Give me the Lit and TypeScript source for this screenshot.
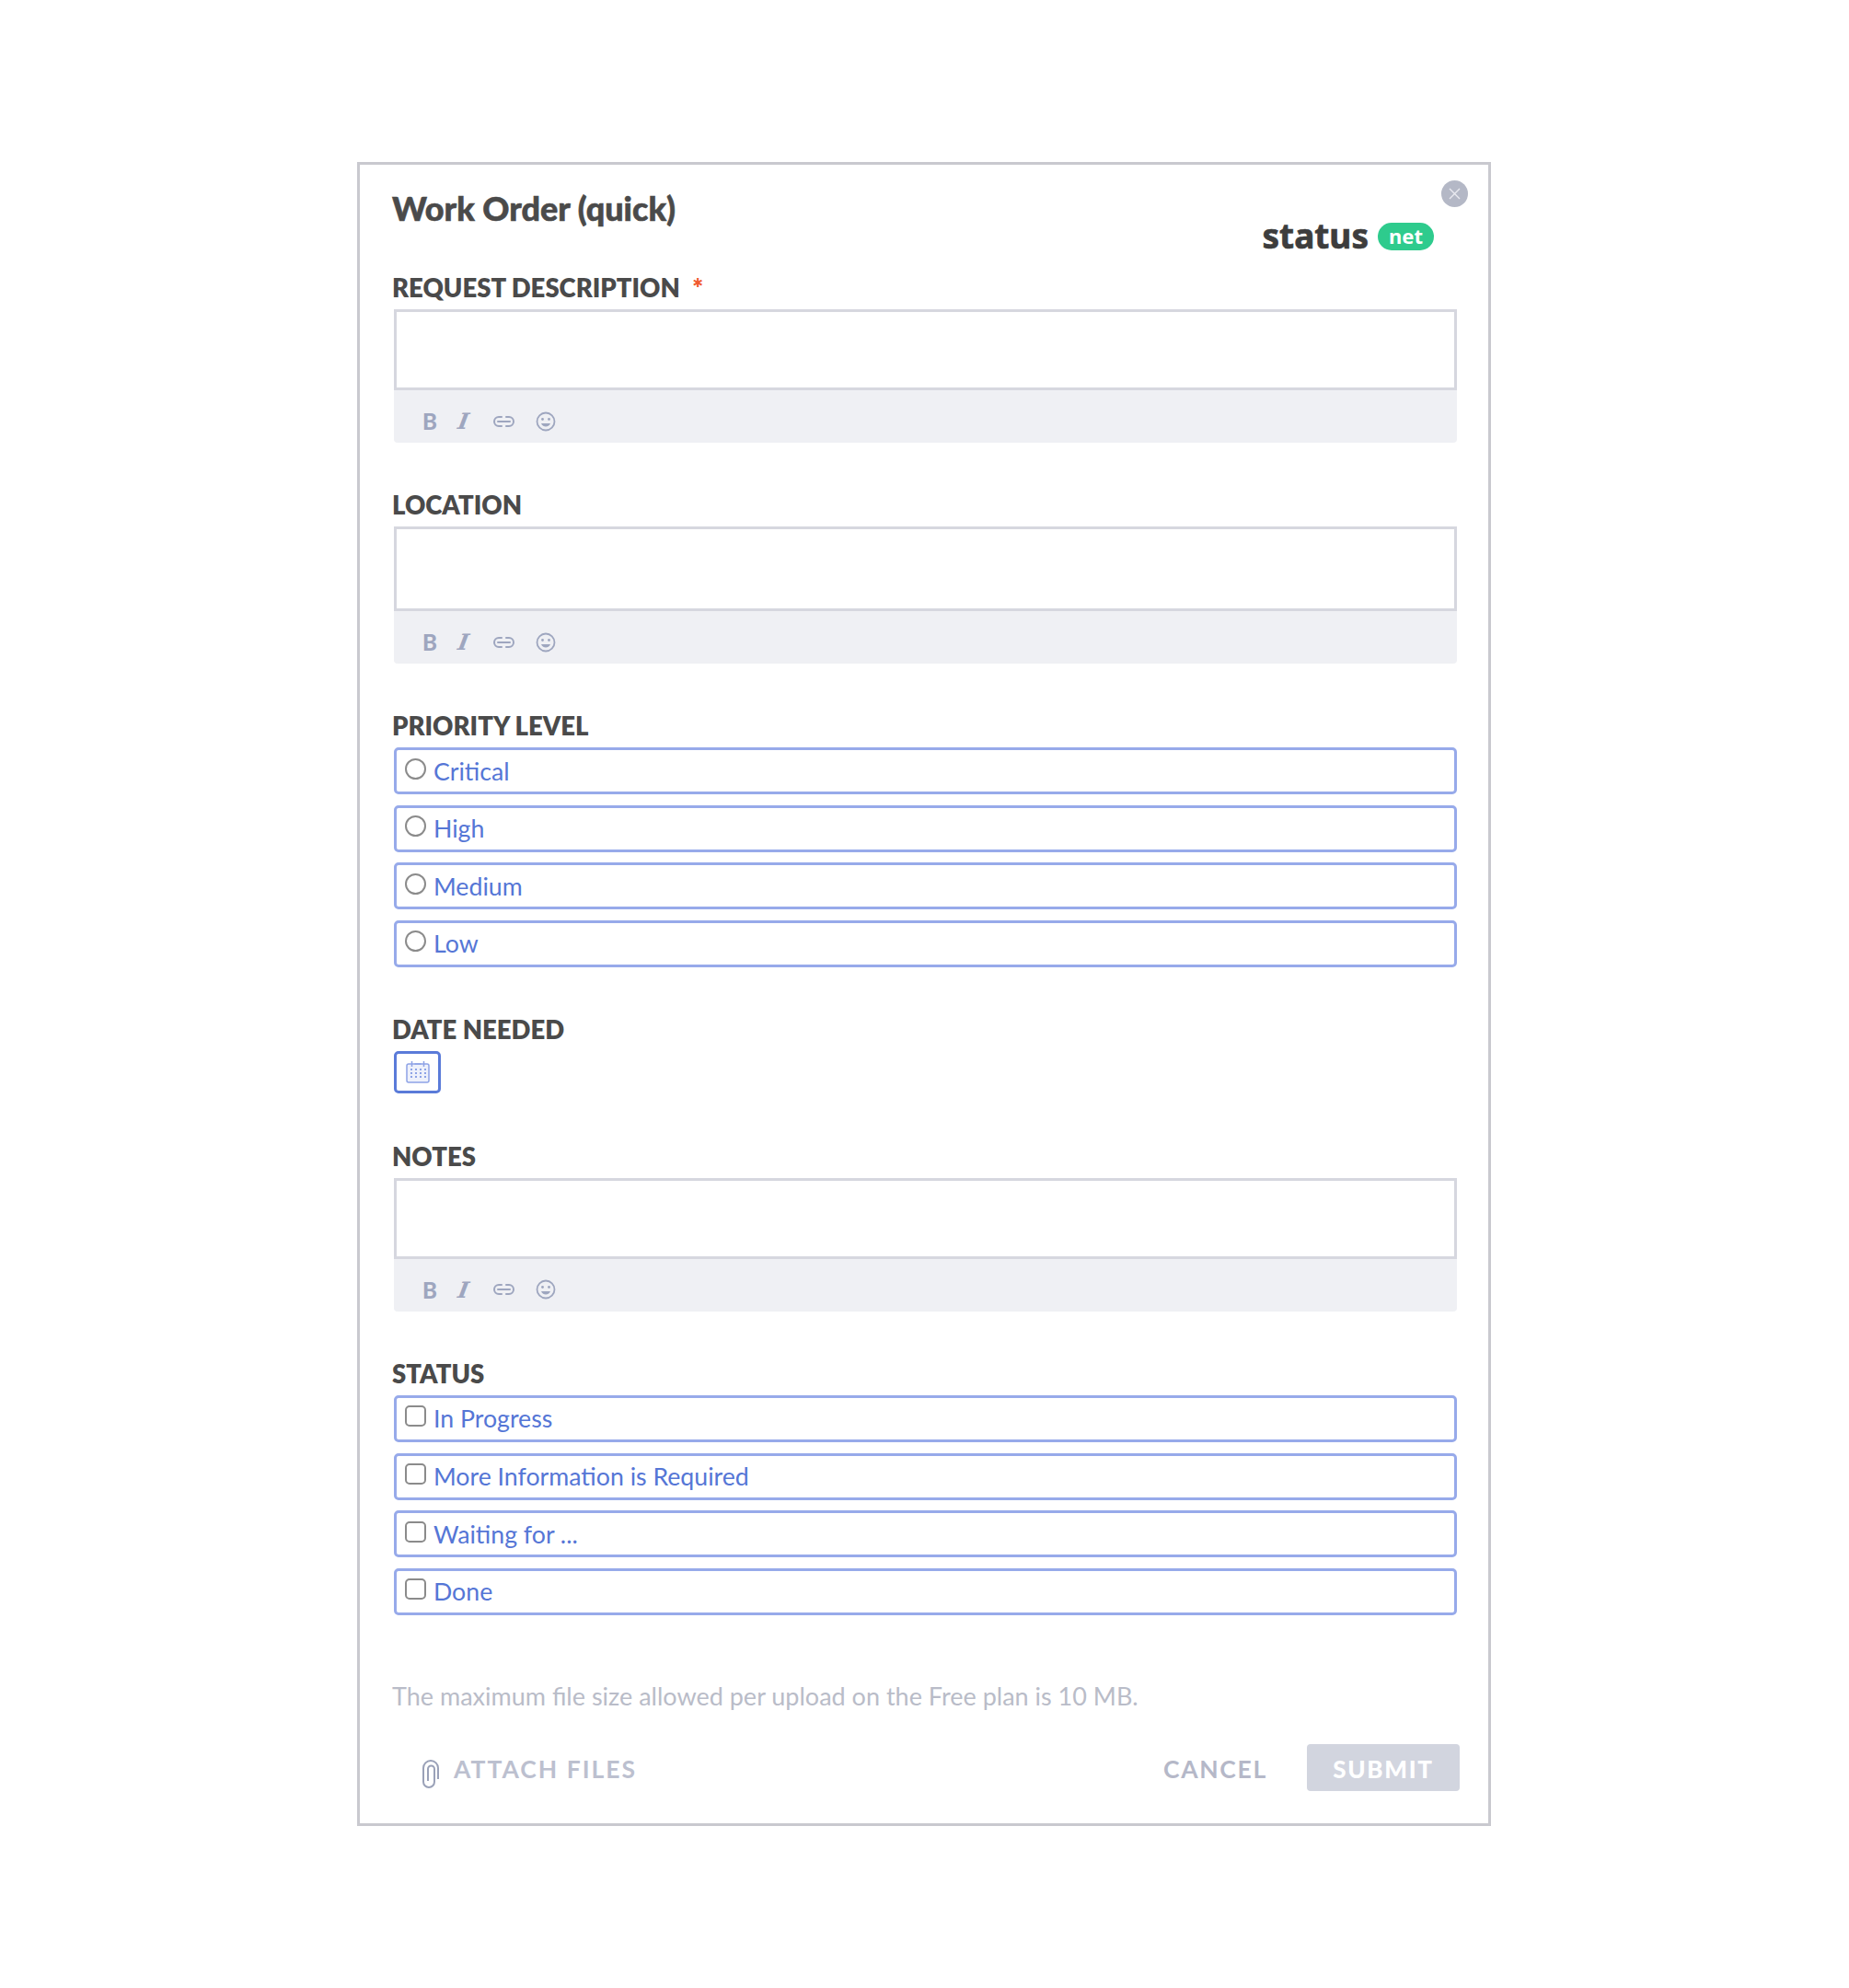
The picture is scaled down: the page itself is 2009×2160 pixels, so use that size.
import { LitElement, html, css, svg } from 'lit';
import { customElement } from 'lit/decorators.js';

const priorities = ['Critical', 'High', 'Medium', 'Low'];
const statuses = ['In Progress', 'More Information is Required', 'Waiting for ...', 'Done'];

const linkIcon = svg`<path d="M10 5H7a5 5 0 0 0 0 10h3M15 5h3a5 5 0 0 1 0 10h-3M6 10h13" fill="none" stroke="currentColor" stroke-width="2" stroke-linecap="round"/>`;
const smileIcon = svg`<circle cx="11" cy="11" r="9.5" fill="none" stroke="currentColor" stroke-width="1.8"/><circle cx="7.5" cy="8.5" r="1.4" fill="currentColor"/><circle cx="14.5" cy="8.5" r="1.4" fill="currentColor"/><path d="M6 13c1.200 2.600 3 3.500 5 3.500s3.800-.9 5-3.500z" fill="currentColor"/>`;

@customElement('app-root')
export class AppRoot extends LitElement {
  static styles = css`
    :host {
      display: block;
      font-family: 'Lato', 'Liberation Sans', sans-serif;
      background: #fff;
    }
    .page {
      height: 2160px;
      padding: 176px 0 0 388px;
      box-sizing: border-box;
    }
    .card {
      position: relative;
      width: 1232px;
      height: 1808px;
      box-sizing: border-box;
      border: 3px solid #c9c9cf;
      padding: 0 34px 0 35px;
    }
    .close {
      position: absolute;
      top: 17px;
      right: 22px;
      width: 29px;
      height: 29px;
      border-radius: 50%;
      background: #b4b8c6;
      display: flex;
      align-items: center;
      justify-content: center;
    }
    .header {
      display: flex;
      justify-content: space-between;
      height: 115px;
    }
    h1 {
      margin: 25px 0 0;
      font-size: 36px;
      line-height: 44px;
      font-weight: 900;
      color: #4a4a4a;
      -webkit-text-stroke: 0.6px #4a4a4a;
    }
    .logo {
      display: flex;
      align-items: center;
      gap: 10px;
      height: 34px;
      margin: 61px 25px 0 0;
    }
    .logo b {
      margin-top: -3px;
      font-family: 'Noto Sans', sans-serif;
      font-size: 37px;
      font-weight: 700;
      color: #3d3d3d;
      -webkit-text-stroke: 0.7px #3d3d3d;
    }
    .logo span {
      width: 61px;
      height: 30px;
      border-radius: 15px;
      background: #2ecb8d;
      color: #fff;
      font-family: 'Noto Sans', sans-serif;
      font-size: 22px;
      font-weight: 700;
      line-height: 29px;
      text-align: center;
    }
    .field {
      margin-bottom: 50px;
    }
    .field.date-field {
      margin-bottom: 51px;
    }
    label {
      display: block;
      height: 34px;
      line-height: 36px;
      margin-bottom: 7px;
      font-size: 27.5px;
      font-weight: 800;
      color: #4a4a4a;
    }
    label.first {
      margin-bottom: 8px;
    }
    .req {
      color: #f05a30;
      font-size: 28px;
      margin-left: 7px;
    }
    .input {
      box-sizing: border-box;
      border: 3px solid #d6d7df;
      background: #fff;
      margin-left: 2px;
    }
    .toolbar {
      display: flex;
      align-items: center;
      box-sizing: border-box;
      height: 57px;
      margin-left: 2px;
      padding: 10px 0 0 31px;
      background: #eff0f4;
      border-radius: 0 0 4px 4px;
      color: #9ea6bf;
    }
    .toolbar .b {
      width: 39px;
      font-size: 24px;
      font-weight: 900;
    }
    .toolbar .i {
      width: 38px;
      font-family: 'DejaVu Serif', serif;
      font-size: 24px;
      font-style: italic;
      font-weight: 700;
      transform: skewX(-10deg);
    }
    .toolbar svg {
      display: block;
    }
    .toolbar .link {
      margin: 0 22px 0 -1px;
    }
    .options {
      display: flex;
      flex-direction: column;
      gap: 11.67px;
      margin: 1px 0 0 2px;
    }
    .options.priority {
      margin-bottom: 50px;
    }
    .options.status {
      margin-top: 3px;
    }
    .option {
      display: flex;
      align-items: center;
      gap: 8px;
      box-sizing: border-box;
      height: 51px;
      padding: 0 0 0 9px;
      border: 3px solid #97aaea;
      border-radius: 5px;
      color: #5576d6;
      font-size: 26.7px;
    }
    .mark {
      width: 23px;
      height: 23px;
      box-sizing: border-box;
      border: 2.5px solid #8b8b8b;
      margin-top: -5px;
    }
    .mark.radio {
      border-radius: 50%;
    }
    .mark.check {
      border-radius: 5px;
    }
    .date {
      display: flex;
      align-items: center;
      justify-content: center;
      box-sizing: border-box;
      width: 51px;
      height: 46px;
      margin-left: 2px;
      border: 3px solid #5a7bd9;
      border-radius: 5px;
    }
    .note {
      margin: 0;
      padding-top: 21px;
      font-size: 27px;
      line-height: 34px;
      color: #b9bcc8;
    }
    .actions {
      display: flex;
      align-items: center;
      margin-top: 35px;
      height: 51px;
      color: #bcc0cf;
      font-size: 26.5px;
      font-weight: 700;
      letter-spacing: 2px;
    }
    .attach {
      display: flex;
      align-items: center;
      margin-left: 32px;
      flex: 1;
    }
    .attach span {
      margin-top: 4px;
    }
    .attach svg {
      margin: 16px 15px 0 0;
    }
    .cancel {
      margin: 4px 43px 0 0;
      color: #b5b8c8;
      letter-spacing: 1.7px;
    }
    .submit {
      width: 166px;
      height: 51px;
      line-height: 55px;
      margin-right: -3px;
      text-align: center;
      border-radius: 4px;
      background: #d2d5df;
      color: #fff;
      font-size: 26px;
      font-weight: 900;
      letter-spacing: 1.7px;
    }
  `;

  editor(height: number) {
    return html`
      <div class="input" style="height:${height}px"></div>
      <div class="toolbar">
        <span class="b">B</span>
        <span class="i">I</span>
        <svg class="link" width="25" height="20" viewBox="0 0 25 20">${linkIcon}</svg>
        <svg width="22" height="22" viewBox="0 0 22 22">${smileIcon}</svg>
      </div>
    `;
  }

  optionList(items: string[], kind: string, cls: string) {
    return html`
      <div class="options ${cls}">
        ${items.map(
          (item) => html`<div class="option"><i class="mark ${kind}"></i>${item}</div>`
        )}
      </div>
    `;
  }

  render() {
    return html`
      <div class="page">
        <div class="card">
          <div class="close">
            <svg width="13" height="13" viewBox="0 0 13 13">
              <path d="M1 1l11 11M12 1L1 12" stroke="#e9eaf0" stroke-width="1.4" fill="none" />
            </svg>
          </div>
          <div class="header">
            <h1>Work Order (quick)</h1>
            <div class="logo"><b>status</b><span>net</span></div>
          </div>

          <div class="field">
            <label class="first">REQUEST DESCRIPTION <span class="req">*</span></label>
            ${this.editor(88)}
          </div>
          <div class="field">
            <label>LOCATION</label>
            ${this.editor(92)}
          </div>
          <div>
            <label>PRIORITY LEVEL</label>
            ${this.optionList(priorities, 'radio', 'priority')}
          </div>
          <div class="field date-field">
            <label>DATE NEEDED</label>
            <div class="date">
              <svg width="26" height="25" viewBox="0 0 26 25" fill="none" stroke="#8ea3e6" stroke-width="1.5">
                <rect x="1" y="4" width="24" height="20" rx="2" fill="#eef1fb" />
                <path d="M6.5 1v6M19.5 1v6M9.5 4h7" />
                <path
                  d="M5 10h2M10 10h2M15 10h2M20 10h2M5 14h2M10 14h2M15 14h2M20 14h2M5 18h2M10 18h2M15 18h2M20 18h2"
                  stroke-width="2"
                />
              </svg>
            </div>
          </div>
          <div class="field">
            <label>NOTES</label>
            ${this.editor(88)}
          </div>
          <div class="field">
            <label>STATUS</label>
            ${this.optionList(statuses, 'check', 'status')}
          </div>

          <p class="note">The maximum file size allowed per upload on the Free plan is 10 MB.</p>
          <div class="actions">
            <div class="attach">
              <svg width="20" height="32" viewBox="0 0 20 32" fill="none" stroke="#9aa1b8" stroke-width="2">
                <path d="M18 21V9a8 8 0 0 0-16 0v15a6 6 0 0 0 12 0V10a3.5 3.5 0 0 0-7 0v13" />
              </svg>
              <span>ATTACH FILES</span>
            </div>
            <span class="cancel">CANCEL</span>
            <span class="submit">SUBMIT</span>
          </div>
        </div>
      </div>
    `;
  }
}
